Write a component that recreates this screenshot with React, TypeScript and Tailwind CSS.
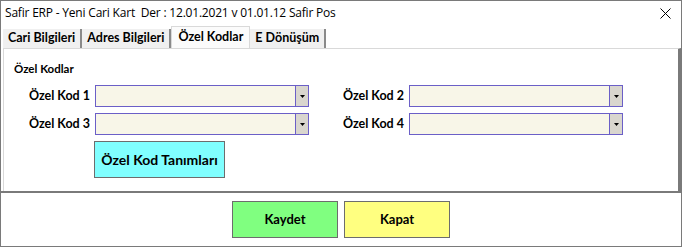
const tabs = ['Cari Bilgileri', 'Adres Bilgileri', 'Özel Kodlar', 'E Dönüşüm'];

function Combo({ label }: { label: string }) {
  return (
    <div className="flex items-center">
      <span className="w-[81px] pr-[5px] text-right text-[12.5px] font-bold text-black">{label}</span>
      <div className="flex h-[22px] w-[214px] border border-[#6b5fc7] bg-[#f8f6e8]">
        <div className="flex-1" />
        <div className="flex w-[13px] items-center justify-center border-l border-[#6b5fc7] bg-[#d9d6ce]">
          <svg width="5" height="3" viewBox="0 0 5 3"><path d="M0 0h5L2.5 3z" fill="#000" /></svg>
        </div>
      </div>
    </div>
  );
}

export default function App() {
  return (
    <div className="flex h-[247px] w-[682px] flex-col border border-[#7a7a7a] bg-white font-['Lato',sans-serif] text-black">
      {/* title bar */}
      <div className="flex h-[24px] items-center justify-between pl-[4px] pr-[10px]">
        <span className="font-['Open_Sans',sans-serif] text-[12px] tracking-[-0.2px]">Safir ERP - Yeni Cari Kart&nbsp; Der : 12.01.2021 v 01.01.12 Safir Pos</span>
        <svg width="11" height="11" viewBox="0 0 11 11"><path d="M0.5 0.5l10 10M10.5 0.5l-10 10" stroke="#000" strokeWidth="1" /></svg>
      </div>

      {/* tabs */}
      <div className="flex h-[23px] items-end pl-[2px]">
        {tabs.map((t) => {
          const active = t === 'Özel Kodlar';
          return active ? (
            <div key={t} className="-mb-px flex h-[23px] items-start border-x border-t border-[#d9d9d9] bg-[#fbfbfb] px-[6px] pt-[1px] text-[12.5px] font-bold">
              {t}
            </div>
          ) : (
            <div key={t} className="flex h-[19px] items-center border-r-2 border-[#8a8a8a] bg-[#f0f0f0] px-[5px] text-[12.5px] font-bold">
              {t}
            </div>
          );
        })}
      </div>

      {/* panel */}
      <div className="ml-[2px] flex flex-1 flex-col border-t border-l border-t-[#d9d9d9] border-l-[#d9d9d9] border-r-[3px] border-r-[#7a7a7a] pl-[10px] pt-[11px]">
        <span className="text-[11.5px] font-bold">Özel Kodlar</span>
        <div className="mt-[8px] grid w-fit grid-cols-[auto_auto] gap-x-[19px] gap-y-[6px]">
          <Combo label="Özel Kod 1" />
          <Combo label="Özel Kod 2" />
          <Combo label="Özel Kod 3" />
          <Combo label="Özel Kod 4" />
        </div>
        <button className="ml-[80px] mt-[6px] h-[37px] w-[131px] border border-[#6d6d6d] bg-[#80ffff] text-[14px] font-bold">
          Özel Kod Tanımları
        </button>
      </div>

      {/* footer */}
      <div className="flex h-[55px] items-center justify-center gap-[6px] border-t-2 border-[#7a7a7a]">
        <button className="h-[37px] w-[106px] border border-[#6d6d6d] bg-[#80ff80] text-[13px] font-bold">Kaydet</button>
        <button className="h-[37px] w-[106px] border border-[#6d6d6d] bg-[#ffff80] text-[13px] font-bold">Kapat</button>
      </div>
    </div>
  );
}
